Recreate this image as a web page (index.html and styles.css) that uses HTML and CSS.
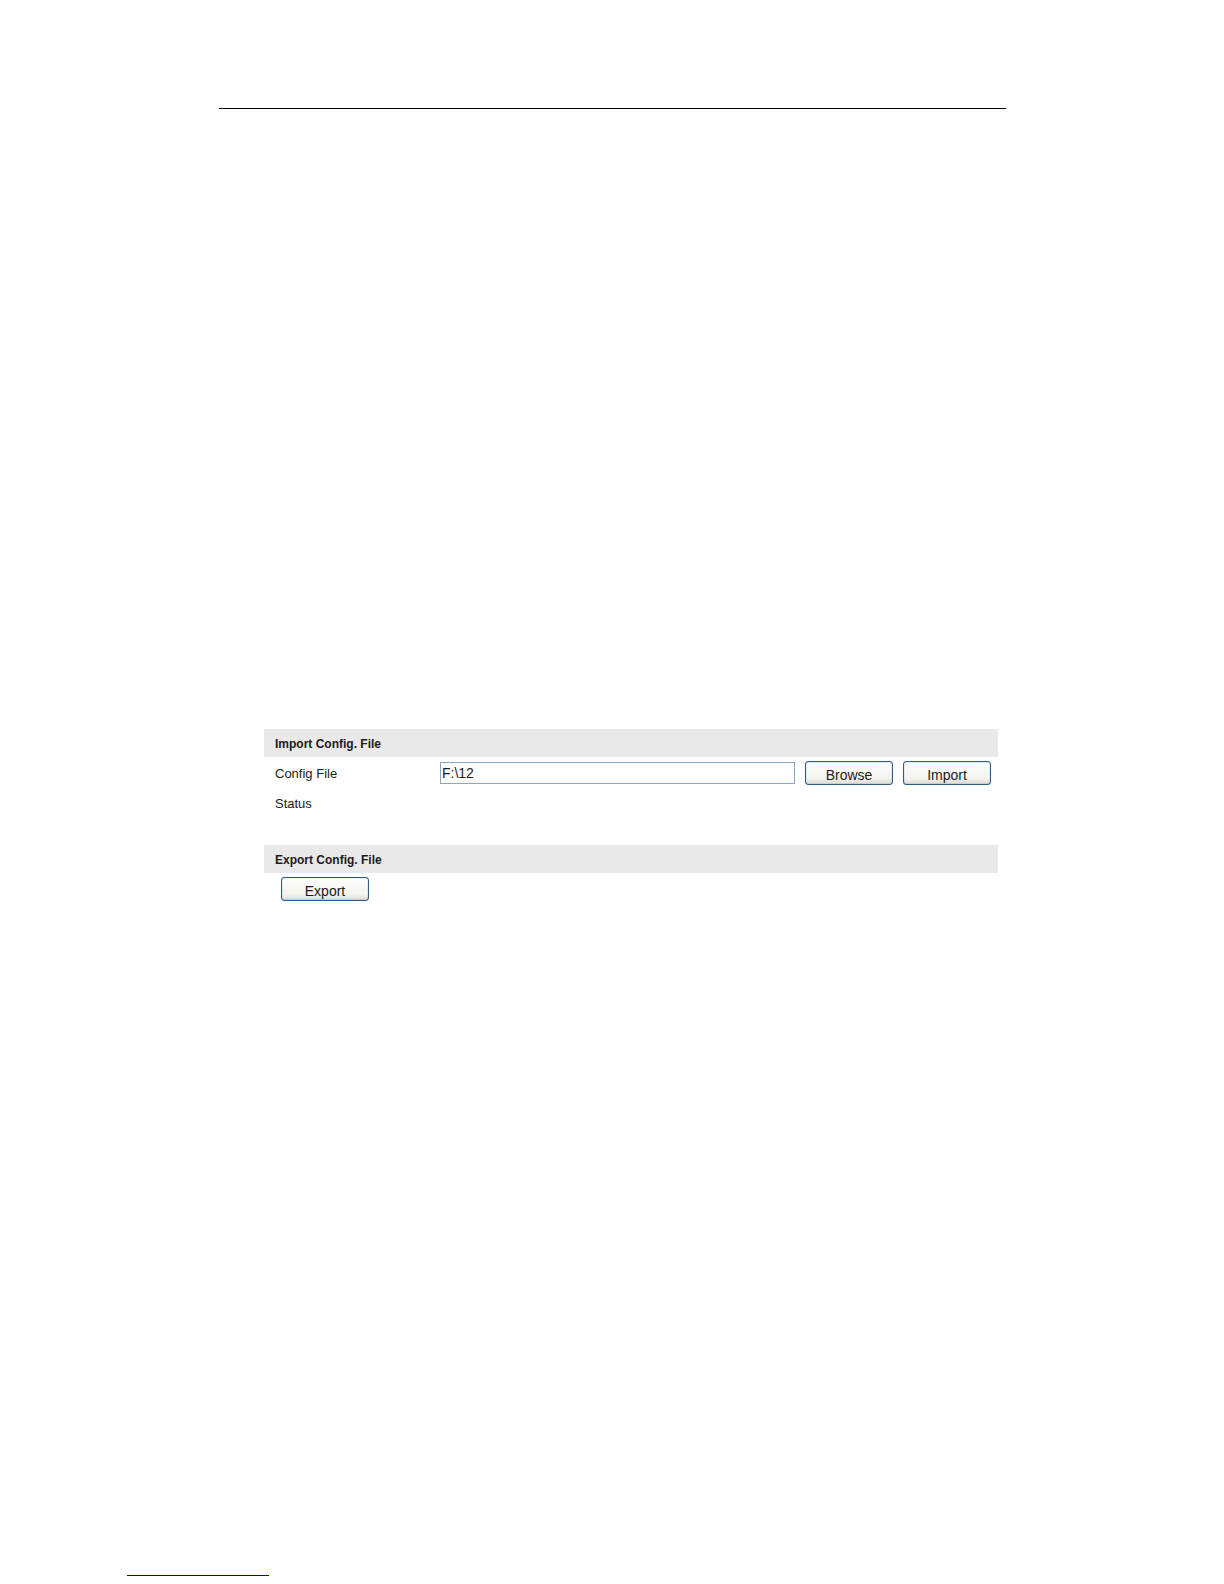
FILE: index.html
```
<!DOCTYPE html>
<html lang="en">
<head>
    <meta charset="UTF-8">
    <meta name="viewport" content="width=device-width, initial-scale=1.0">
    <title>Config. File</title>
    <link rel="stylesheet" href="styles.css">
</head>
<body>

<hr class="header-line">

<main class="config">
    <!-- Import -->
    <section class="config-section">
        <h2>Import Config. File</h2>
        <form class="config-form">
            <div class="config-row">
                <label for="configFile">Config File</label>
                <input type="text" id="configFile" value="F:\12">
                <button type="button">Browse</button>
                <button type="button">Import</button>
            </div>
            <div class="config-row">
                <span>Status</span>
            </div>
        </form>
    </section>

    <!-- Export -->
    <section class="config-section">
        <h2>Export Config. File</h2>
        <div class="export-row">
            <button type="button">Export</button>
        </div>
    </section>
</main>

<hr class="footer-line">

</body>
</html>
```
FILE: styles.css
```
/* Basic styling */
* { box-sizing: border-box; }
body {
    display: flex;
    flex-direction: column;
    min-height: 100vh;
    margin: 0;
    padding: 108px 218px 8px 219px;
    background-color: #FFFFFF;
    color: #1c1a20;
    font-family: "Liberation Sans", Arial, sans-serif;
    font-size: 13px;
}

/* Rules at the top and bottom of the page */
hr { margin: 0; border: none; height: 1px; }
.header-line { width: 100%; background-color: #000000; }
.footer-line { width: 142px; margin: auto 0 0 -92px; background-color: #0a0a90; }

/* Config panel */
.config {
    display: flex;
    flex-direction: column;
    gap: 27px;
    margin: 620px 8px 40px 45px;
}
.config h2 {
    margin: 0;
    padding: 2px 11px 0;
    background-color: #e9e9e9;
    font-size: 12px;
    line-height: 26px;
}

/* Form rows */
.config-form { padding: 1px 7px 0 11px; }
.config-row {
    display: grid;
    grid-template-columns: 155px 1fr 88px 88px;
    align-items: center;
    column-gap: 10px;
    height: 30px;
}
.export-row { padding: 4px 17px; }

input {
    width: 100%;
    height: 22px;
    padding: 0 1px;
    border: 1px solid #89a6c6;
    background-color: #FFFFFF;
    color: #1c1a20;
    font-family: inherit;
    font-size: 14px;
}
button {
    width: 88px;
    height: 24px;
    padding: 3px 0 0;
    border: 1px solid #2f5c86;
    border-radius: 3px;
    background: linear-gradient(#FFFFFF, #f3f3ef 75%, #dcd9d0);
    box-shadow: inset 0 0 1px #2f5c86;
    color: #1c1a20;
    font-family: inherit;
    font-size: 14px;
    cursor: pointer;
}
button:hover { background: #f3f3ef; }
```
